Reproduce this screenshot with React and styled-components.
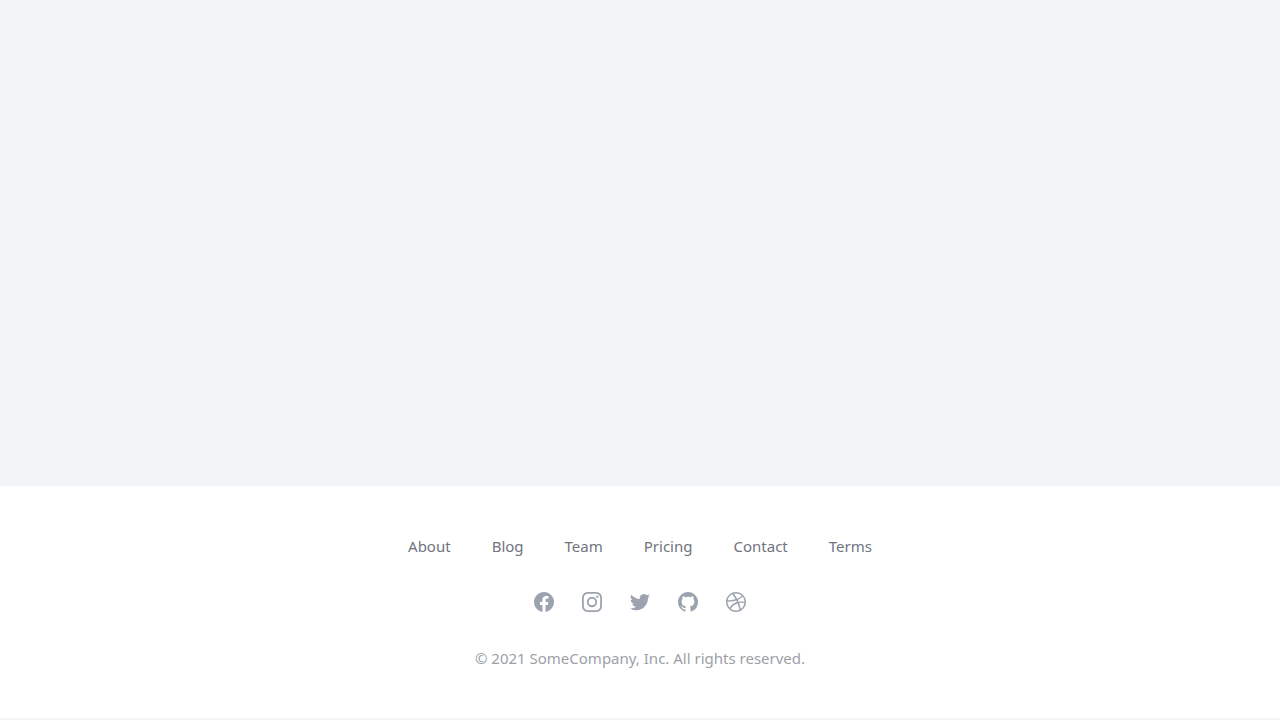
import React from 'react';
import styled, { createGlobalStyle } from 'styled-components';

const GlobalStyle = createGlobalStyle`
  *, *::before, *::after {
    box-sizing: border-box;
  }

  body {
    margin: 0;
    background: #f3f4f6;
    color: #9d9fa8;
    font-family: 'Noto Sans', 'Open Sans', sans-serif;
    font-size: 15px;
    line-height: 24px;
  }
`;

const Page = styled.div`
  display: flex;
  flex-direction: column;
  min-height: 100vh;
  padding-bottom: 2px;
`;

const Content = styled.main`
  flex: 1;
`;

const Footer = styled.footer`
  background: #fff;
`;

const FooterInner = styled.div`
  display: flex;
  flex-direction: column;
  align-items: center;
  gap: 32px;
  max-width: 1280px;
  margin: 0 auto;
  padding: 48px 16px;
`;

const Nav = styled.nav`
  display: flex;
  flex-wrap: wrap;
  justify-content: center;
  gap: 16px 41px;
`;

const NavLink = styled.a`
  color: #70747e;
  text-decoration: none;

  &:hover {
    color: #111827;
  }
`;

const Socials = styled.div`
  display: flex;
  justify-content: center;
  gap: 24px;
`;

const SocialLink = styled.a`
  color: #9ca3af;

  &:hover {
    color: #6b7280;
  }

  svg {
    display: block;
    width: 24px;
    height: 24px;
  }
`;

const Copyright = styled.p`
  margin: 0;
  text-align: center;
`;

const links = ['About', 'Blog', 'Team', 'Pricing', 'Contact', 'Terms'];

const socials = [
  {
    name: 'Facebook',
    path: 'M22 12c0-5.523-4.477-10-10-10S2 6.477 2 12c0 4.991 3.657 9.128 8.438 9.878v-6.987h-2.54V12h2.54V9.797c0-2.506 1.492-3.89 3.777-3.89 1.094 0 2.238.195 2.238.195v2.46h-1.26c-1.243 0-1.63.771-1.63 1.562V12h2.773l-.443 2.89h-2.33v6.988C18.343 21.128 22 16.991 22 12z',
  },
  {
    name: 'Instagram',
    path: 'M12.315 2c2.43 0 2.784.013 3.808.06 1.064.049 1.791.218 2.427.465a4.902 4.902 0 011.772 1.153 4.902 4.902 0 011.153 1.772c.247.636.416 1.363.465 2.427.048 1.067.06 1.407.06 4.123v.08c0 2.643-.012 2.987-.06 4.043-.049 1.064-.218 1.791-.465 2.427a4.902 4.902 0 01-1.153 1.772 4.902 4.902 0 01-1.772 1.153c-.636.247-1.363.416-2.427.465-1.067.048-1.407.06-4.123.06h-.08c-2.643 0-2.987-.012-4.043-.06-1.064-.049-1.791-.218-2.427-.465a4.902 4.902 0 01-1.772-1.153 4.902 4.902 0 01-1.153-1.772c-.247-.636-.416-1.363-.465-2.427-.047-1.024-.06-1.379-.06-3.808v-.63c0-2.43.013-2.784.06-3.808.049-1.064.218-1.791.465-2.427a4.902 4.902 0 011.153-1.772A4.902 4.902 0 015.45 2.525c.636-.247 1.363-.416 2.427-.465C8.901 2.013 9.256 2 11.685 2h.63zm-.081 1.802h-.468c-2.456 0-2.784.011-3.807.058-.975.045-1.504.207-1.857.344-.467.182-.8.398-1.15.748-.35.35-.566.683-.748 1.15-.137.353-.3.882-.344 1.857-.047 1.023-.058 1.351-.058 3.807v.468c0 2.456.011 2.784.058 3.807.045.975.207 1.504.344 1.857.182.466.399.8.748 1.15.35.35.683.566 1.15.748.353.137.882.3 1.857.344 1.054.048 1.37.058 4.041.058h.08c2.597 0 2.917-.01 3.96-.058.976-.045 1.505-.207 1.858-.344.466-.182.8-.398 1.15-.748.35-.35.566-.683.748-1.15.137-.353.3-.882.344-1.857.048-1.055.058-1.37.058-4.041v-.08c0-2.597-.01-2.917-.058-3.96-.045-.976-.207-1.505-.344-1.858a3.097 3.097 0 00-.748-1.15 3.098 3.098 0 00-1.15-.748c-.353-.137-.882-.3-1.857-.344-1.023-.047-1.351-.058-3.807-.058zM12 6.865a5.135 5.135 0 110 10.27 5.135 5.135 0 010-10.27zm0 1.802a3.333 3.333 0 100 6.666 3.333 3.333 0 000-6.666zm5.338-3.205a1.2 1.2 0 110 2.4 1.2 1.2 0 010-2.4z',
  },
  {
    name: 'Twitter',
    path: 'M8.29 20.251c7.547 0 11.675-6.253 11.675-11.675 0-.178 0-.355-.012-.53A8.348 8.348 0 0022 5.92a8.19 8.19 0 01-2.357.646 4.118 4.118 0 001.804-2.27 8.224 8.224 0 01-2.605.996 4.107 4.107 0 00-6.993 3.743 11.65 11.65 0 01-8.457-4.287 4.106 4.106 0 001.27 5.477A4.072 4.072 0 012.8 9.713v.052a4.105 4.105 0 003.292 4.022 4.095 4.095 0 01-1.853.07 4.108 4.108 0 003.834 2.85A8.233 8.233 0 012 18.407a11.616 11.616 0 006.29 1.84',
  },
  {
    name: 'GitHub',
    path: 'M12 2C6.477 2 2 6.484 2 12.017c0 4.425 2.865 8.18 6.839 9.504.5.092.682-.217.682-.483 0-.237-.008-.868-.013-1.703-2.782.605-3.369-1.343-3.369-1.343-.454-1.158-1.11-1.466-1.11-1.466-.908-.62.069-.608.069-.608 1.003.07 1.531 1.032 1.531 1.032.892 1.53 2.341 1.088 2.91.832.092-.647.35-1.088.636-1.338-2.22-.253-4.555-1.113-4.555-4.951 0-1.093.39-1.988 1.029-2.688-.103-.253-.446-1.272.098-2.65 0 0 .84-.27 2.75 1.026A9.564 9.564 0 0112 6.844c.85.004 1.705.115 2.504.337 1.909-1.296 2.747-1.027 2.747-1.027.546 1.379.202 2.398.1 2.651.64.7 1.028 1.595 1.028 2.688 0 3.848-2.339 4.695-4.566 4.943.359.309.678.92.678 1.855 0 1.338-.012 2.419-.012 2.747 0 .268.18.58.688.482A10.019 10.019 0 0022 12.017C22 6.484 17.522 2 12 2z',
  },
  {
    name: 'Dribbble',
    path: 'M12 2C6.48 2 2 6.48 2 12s4.48 10 10 10c5.51 0 10-4.48 10-10S17.51 2 12 2zm6.605 4.61a8.502 8.502 0 011.93 5.314c-.281-.054-3.101-.629-5.943-.271-.065-.141-.12-.293-.184-.445a25.416 25.416 0 00-.564-1.236c3.145-1.28 4.577-3.124 4.761-3.362zM12 3.475c2.17 0 4.154.813 5.662 2.148-.152.216-1.443 1.941-4.48 3.08-1.399-2.57-2.95-4.675-3.189-5A8.687 8.687 0 0112 3.475zm-3.633.803a53.896 53.896 0 013.167 4.935c-3.992 1.063-7.517 1.04-7.896 1.04a8.581 8.581 0 014.729-5.975zM3.453 12.01v-.26c.37.01 4.512.065 8.775-1.215.25.477.477.965.694 1.453-.109.033-.228.065-.336.098-4.404 1.42-6.747 5.303-6.942 5.629a8.522 8.522 0 01-2.19-5.705zM12 20.547a8.482 8.482 0 01-5.239-1.8c.152-.315 1.888-3.656 6.703-5.337.022-.01.033-.01.054-.022a35.318 35.318 0 011.823 6.475 8.4 8.4 0 01-3.341.684zm4.761-1.465c-.086-.52-.542-3.015-1.659-6.084 2.679-.423 5.022.271 5.314.369a8.468 8.468 0 01-3.655 5.715z',
  },
];

const App = () => {
  return (
    <>
      <GlobalStyle />
      <Page>
        <Content />
        <Footer>
          <FooterInner>
            <Nav aria-label="Footer">
              {links.map(label => (
                <NavLink key={label} href={`#${label.toLowerCase()}`}>
                  {label}
                </NavLink>
              ))}
            </Nav>
            <Socials>
              {socials.map(({ name, path }) => (
                <SocialLink key={name} href={`#${name.toLowerCase()}`} aria-label={name}>
                  <svg viewBox="0 0 24 24" fill="currentColor" aria-hidden="true">
                    <path fillRule="evenodd" clipRule="evenodd" d={path} />
                  </svg>
                </SocialLink>
              ))}
            </Socials>
            <Copyright>© 2021 SomeCompany, Inc. All rights reserved.</Copyright>
          </FooterInner>
        </Footer>
      </Page>
    </>
  );
};

export default App;
